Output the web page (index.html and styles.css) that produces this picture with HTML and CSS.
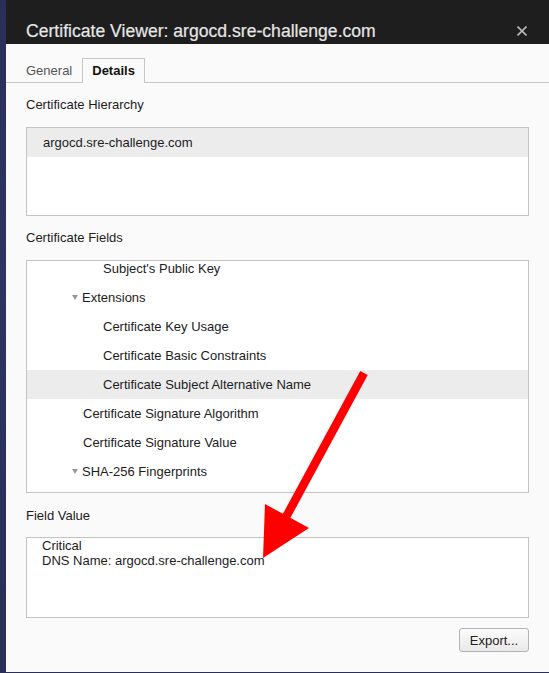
FILE: index.html
```html
<!DOCTYPE html>
<html lang="en">
<head>
<meta charset="utf-8">
<title>Certificate Viewer</title>
<link rel="stylesheet" href="styles.css">
</head>
<body>
<div class="window">
  <div class="titlebar">
    <span class="title">Certificate Viewer: argocd.sre-challenge.com</span>
    <svg class="close" width="10" height="10" viewBox="0 0 10 10"><path d="M0.5 0.5L9.5 9.5M9.5 0.5L0.5 9.5" stroke="#b9b9b9" stroke-width="1.6" fill="none"/></svg>
  </div>
  <div class="tabs">
    <div class="tab">General</div>
    <div class="tab active">Details</div>
  </div>
  <div class="content">
    <div class="label first">Certificate Hierarchy</div>
    <div class="box hierarchy">
      <div class="row selected hier-row">argocd.sre-challenge.com</div>
    </div>
    <div class="label">Certificate Fields</div>
    <div class="box fields">
      <div class="list">
        <div class="row lvl2">Subject's Public Key</div>
        <div class="row lvl1"><span class="tri"></span>Extensions</div>
        <div class="row lvl2">Certificate Key Usage</div>
        <div class="row lvl2">Certificate Basic Constraints</div>
        <div class="row lvl2 selected">Certificate Subject Alternative Name</div>
        <div class="row lvl1">Certificate Signature Algorithm</div>
        <div class="row lvl1">Certificate Signature Value</div>
        <div class="row lvl1"><span class="tri"></span>SHA-256 Fingerprints</div>
      </div>
    </div>
    <div class="label value-label">Field Value</div>
    <div class="box value">
      <div>Critical</div>
      <div>DNS Name: argocd.sre-challenge.com</div>
    </div>
    <div class="actions">
      <button class="btn">Export...</button>
    </div>
  </div>
</div>
<svg class="arrow" width="549" height="673" viewBox="0 0 549 673">
  <line x1="364" y1="373" x2="286" y2="517" stroke="#fe0000" stroke-width="8.5"/>
  <polygon points="263,558 265,504 309,528" fill="#fe0000"/>
</svg>
</body>
</html>
```

FILE: styles.css
```css
html, body {
  margin: 0;
  padding: 0;
}
body {
  width: 549px;
  height: 673px;
  overflow: hidden;
  background: linear-gradient(180deg, #2a2f58 0%, #2c3563 40%, #2b315c 70%, #2a2f58 100%);
  font-family: "Liberation Sans", Arial, Helvetica, sans-serif;
  font-size: 13px;
  color: #1c1c1c;
  position: relative;
}
.window {
  margin-left: 6px;
  width: 543px;
  height: 672px;
  background: #fafafa;
  display: flex;
  flex-direction: column;
}
.titlebar {
  height: 44px;
  box-sizing: border-box;
  background: #1e1e1e;
  padding: 19px 22px 0 20px;
  display: flex;
  justify-content: space-between;
  align-items: flex-start;
}
.title {
  font-size: 17.6px;
  line-height: 24px;
  color: #e6e6e6;
  -webkit-text-stroke: 0.2px #e6e6e6;
}
.close {
  margin-top: 7px;
}
.tabs {
  display: flex;
  padding: 14px 0 0 9px;
  border-bottom: 1px solid #c6c6c6;
}
.tab {
  height: 23px;
  line-height: 23px;
  padding: 0 10px;
  border: 1px solid transparent;
  border-bottom: none;
  color: #555;
}
.tab.active {
  margin-left: -1px;
  padding: 0 9px;
  font-weight: bold;
  color: #111;
  border-color: #c6c6c6;
  background: #fafafa;
  margin-bottom: -1px;
  height: 24px;
}
.content {
  display: flex;
  flex-direction: column;
  padding: 0 20px;
}
.label {
  line-height: 16px;
  margin-top: 14px;
}
.value-label {
  margin-top: 15px;
}
.box {
  margin-top: 14px;
  background: #fff;
  border: 1px solid #c3c3c3;
  box-sizing: border-box;
  overflow: hidden;
}
.hierarchy {
  height: 89px;
}
.row {
  height: 29px;
  line-height: 29px;
  display: flex;
  align-items: center;
  white-space: nowrap;
}
.hier-row {
  padding-left: 16px;
}
.selected {
  background: #ececec;
}
.fields {
  height: 233px;
}
.list {
  margin-top: -7px;
}
.lvl1 {
  padding-left: 56px;
}
.lvl2 {
  padding-left: 76px;
}
.tri {
  width: 0;
  height: 0;
  border-left: 3.5px solid transparent;
  border-right: 3.5px solid transparent;
  border-top: 5px solid #9a9a9a;
  margin-left: -11px;
  margin-right: 4px;
  margin-top: -1px;
}
.value {
  margin-top: 13px;
  height: 81px;
  padding: 0 15px;
  line-height: 15px;
}
.actions {
  display: flex;
  justify-content: flex-end;
  margin-top: 10px;
}
.btn {
  width: 70px;
  height: 24px;
  font-family: "Liberation Sans", Arial, Helvetica, sans-serif;
  font-size: 13px;
  color: #222;
  background: linear-gradient(180deg, #fbfbfb 0%, #e9e9e9 100%);
  border: 1px solid #b4b4b4;
  border-radius: 3px;
  padding: 0;
}
.arrow {
  position: absolute;
  left: 0;
  top: 0;
  pointer-events: none;
}
```
